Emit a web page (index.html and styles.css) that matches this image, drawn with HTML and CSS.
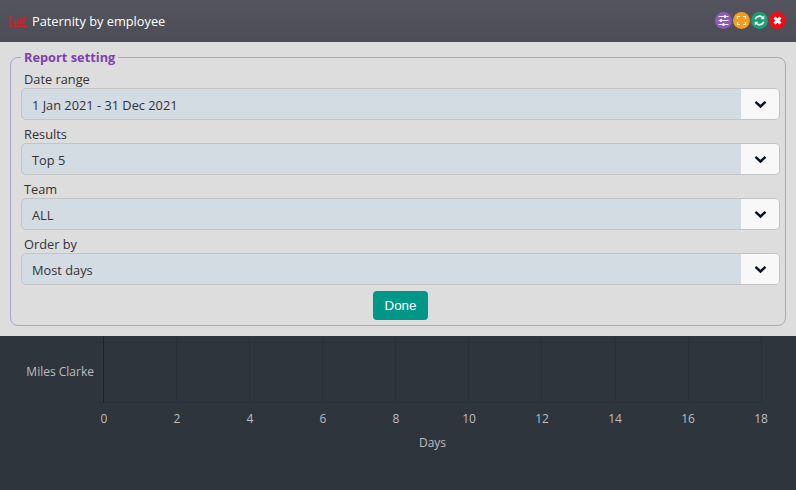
FILE: index.html
```html
<!DOCTYPE html>
<html lang="en">
<head>
<meta charset="utf-8">
<title>Paternity by employee</title>
<link rel="stylesheet" href="styles.css">
</head>
<body>
<div class="window">
  <header class="titlebar">
    <svg class="title-icon" width="17" height="14" viewBox="0 0 17 14"><path class="ti-axis" d="M.5 1v11.500H17"/><path class="ti-bars" d="M3.500 6.500h2.500V11H3.500zM6.800 5h2.500v6H6.800zM10 4h2.500v7H10zM13 1.500h2.500V11H13z"/></svg>
    <h1 class="title">Paternity by employee</h1>
    <div class="actions">
      <span class="btn btn-purple"><svg width="17" height="17" viewBox="0 0 17 17"><path class="ic" d="M3.500 4.500h10M3.500 8.500h10M3.500 12.500h10"/><path class="ic-thick" d="M10 3v3M6 7v3M8.500 11v3"/></svg></span>
      <span class="btn btn-orange"><svg width="17" height="17" viewBox="0 0 17 17"><path class="ic" d="M4.500 7V4.500H7M10 4.500h2.500V7M12.500 10v2.500H10M7 12.500H4.500V10"/></svg></span>
      <span class="btn btn-green"><svg width="17" height="17" viewBox="0 0 17 17"><path class="ic-r" d="M4.200 7.200A4.500 4.500 0 0 1 12 6M12.800 9.800A4.500 4.500 0 0 1 5 11"/><path class="ic-fill" d="M13.300 3.500v3.700H9.600zM3.700 13.500V9.800h3.700z"/></svg></span>
      <span class="btn btn-red"><svg width="17" height="17" viewBox="0 0 17 17"><path class="ic-x" d="M5.500 5.500l6 6M11.500 5.500l-6 6"/></svg></span>
    </div>
  </header>
  <section class="panel">
    <fieldset class="settings">
      <legend class="legend">Report setting</legend>
      <div class="field">
        <label class="label">Date range</label>
        <div class="select"><span class="value">1 Jan 2021 - 31 Dec 2021</span><span class="arrow"><svg width="13" height="9" viewBox="0 0 13 9"><path class="chev" d="M1.500 1.800l5 4.700 5-4.700"/></svg></span></div>
      </div>
      <div class="field">
        <label class="label">Results</label>
        <div class="select"><span class="value">Top 5</span><span class="arrow"><svg width="13" height="9" viewBox="0 0 13 9"><path class="chev" d="M1.500 1.800l5 4.700 5-4.700"/></svg></span></div>
      </div>
      <div class="field">
        <label class="label">Team</label>
        <div class="select"><span class="value">ALL</span><span class="arrow"><svg width="13" height="9" viewBox="0 0 13 9"><path class="chev" d="M1.500 1.800l5 4.700 5-4.700"/></svg></span></div>
      </div>
      <div class="field">
        <label class="label">Order by</label>
        <div class="select"><span class="value">Most days</span><span class="arrow"><svg width="13" height="9" viewBox="0 0 13 9"><path class="chev" d="M1.500 1.800l5 4.700 5-4.700"/></svg></span></div>
      </div>
      <div class="done-row"><button class="done">Done</button></div>
    </fieldset>
  </section>
  <section class="chart">
    <svg width="796" height="154" viewBox="0 336 796 154">
      <path class="grid" d="M94 342.500H761M94 402.500H761M176.500 336V402M249.500 336V402M322.500 336V402M395.500 336V402M468.500 336V402M541.500 336V402M615.500 336V402M688.500 336V402M761.500 336V402"/>
      <path class="axis" d="M103.500 336V402"/>
      <text class="name" x="94" y="376" text-anchor="end">Miles Clarke</text>
      <g class="ticks" text-anchor="middle">
        <text x="104" y="423">0</text><text x="177" y="423">2</text><text x="250" y="423">4</text><text x="323" y="423">6</text><text x="396" y="423">8</text><text x="469" y="423">10</text><text x="542" y="423">12</text><text x="615" y="423">14</text><text x="688" y="423">16</text><text x="761" y="423">18</text>
      </g>
      <text class="days" x="432.500" y="447" text-anchor="middle">Days</text>
    </svg>
  </section>
</div>
</body>
</html>
```
FILE: styles.css
```css
* { box-sizing: border-box; }
html, body { margin: 0; padding: 0; }
body { width: 796px; height: 490px; overflow: hidden; font-family: "Open Sans", sans-serif; background: #2e353d; }
.window { display: flex; flex-direction: column; height: 490px; }
.titlebar { height: 42px; display: flex; align-items: center; padding: 0 10px; background: linear-gradient(#53545d, #4c4d56); }
.title-icon { flex: none; margin-right: 5px; }
.ti-axis { fill: none; stroke: #c02a35; stroke-width: 1.200; }
.ti-bars { fill: #b52a35; }
.title { margin: 0; font-size: 12.800px; font-weight: 400; color: #fff; flex: 1; }
.actions { display: flex; gap: 1px; margin-bottom: 2px; }
.btn { width: 17px; height: 17px; border-radius: 50%; display: block; }
.btn svg { display: block; }
.btn-purple { background: #8e5bbd; }
.btn-orange { background: #f39c1f; }
.btn-green { background: #1f9d74; }
.btn-red { background: #f00d17; }
.ic { fill: none; stroke: #eee; stroke-width: 1.200; }
.ic-thick { fill: none; stroke: #eee; stroke-width: 1.800; }
.ic-r { fill: none; stroke: #eee; stroke-width: 1.700; }
.ic-fill { fill: #eee; }
.ic-x { fill: none; stroke: #fff; stroke-width: 3; }
.panel { height: 294px; background: #dddddd; padding: 6px 10px 10px; }
.settings { margin: 0; height: 278px; padding: 0 5px 0 10px; border: 1px solid #a9a7c4; border-radius: 8px; }
.legend { padding: 0 3px; margin-left: 0; font-size: 12.800px; font-weight: 700; color: #7e3fb0; line-height: 18px; }
.field { display: flex; flex-direction: column; margin-bottom: 1px; }
.label { font-size: 12.800px; line-height: 18px; color: #333; padding: 4px 0 0 3px; height: 22px; }
.select { height: 32px; display: flex; border: 1px solid #c2c4c6; border-radius: 5px; overflow: hidden; background: #d3dbe3; }
.value { flex: 1; padding-left: 10px; font-size: 12.800px; line-height: 32px; color: #333; }
.arrow { width: 38px; background: #f8f8f8; display: flex; align-items: center; justify-content: center; }
.arrow svg { display: block; }
.chev { fill: none; stroke: #0b1526; stroke-width: 2.500; }
.done-row { display: flex; justify-content: center; padding-top: 5px; }
.done { width: 55px; height: 29px; padding: 0; border: 0; border-radius: 4px; background: #009688; color: #fff; font-family: "Liberation Sans", sans-serif; font-size: 13.330px; }
.chart { flex: 1; background: #2e353d; }
.chart svg { display: block; }
.grid { fill: none; stroke: #293037; stroke-width: 1; }
.axis { fill: none; stroke: #1d232a; stroke-width: 1; }
.name, .ticks, .days { font-family: "Open Sans", sans-serif; font-size: 12px; fill: #bdbdbd; }
```
